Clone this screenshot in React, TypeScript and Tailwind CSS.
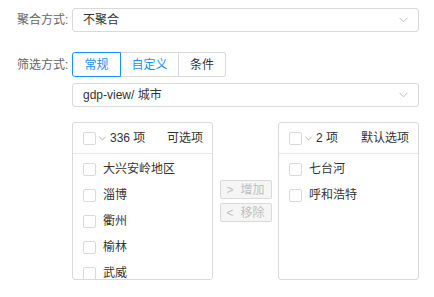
import React from "react";

const font = { fontFamily: '"Liberation Sans", "Noto Sans CJK SC", sans-serif' };

function Chevron({ className = "" }: { className?: string }) {
  return (
    <svg width="9" height="6" viewBox="0 0 9 6" className={className}>
      <path d="M0.5 0.8 L4.5 4.8 L8.5 0.8" fill="none" stroke="currentColor" strokeWidth="1" />
    </svg>
  );
}

function Box() {
  return <span className="inline-block w-[13px] h-[13px] border border-[#d9d9d9] rounded-[2px] bg-white shrink-0" />;
}

function Panel({ count, title, items }: { count: string; title: string; items: string[] }) {
  return (
    <div className="w-[141px] h-[158px] border border-[#d9d9d9] rounded-[3px] overflow-hidden flex flex-col">
      <div className="h-[31px] border-b border-[#e8e8e8] flex items-center pl-[10px] pr-[9px] shrink-0">
        <Box />
        <Chevron className="ml-[3px] text-[#999] w-[7px] h-[5px]" />
        <span className="ml-[4px] text-[12px] text-[#333]">{count}</span>
        <span className="ml-auto text-[12px] text-[#333]">{title}</span>
      </div>
      <div className="pt-[2px]">
        {items.map((t) => (
          <div key={t} className="h-[26px] flex items-center pl-[10px]">
            <Box />
            <span className="ml-[7px] text-[12px] text-[#333]">{t}</span>
          </div>
        ))}
      </div>
    </div>
  );
}

function Select({ value }: { value: string }) {
  return (
    <div className="w-[347px] h-[24px] border border-[#d9d9d9] rounded-[3px] flex items-center pl-[10px] pr-[9px]">
      <span className="text-[12px] text-[#333]">{value}</span>
      <Chevron className="ml-auto mr-[1px] text-[#bfbfbf]" />
    </div>
  );
}

export default function App() {
  return (
    <div className="w-[434px] h-[297px] bg-white relative" style={font}>
      <div className="pt-[8px] flex flex-col">
        <div className="flex items-center">
          <div className="w-[72px] pl-[17px] text-[12px] text-[#666]">聚合方式:</div>
          <Select value="不聚合" />
        </div>
        <div className="flex items-center mt-[20px]">
          <div className="w-[72px] pl-[17px] text-[12px] text-[#666]">筛选方式:</div>
          <div className="flex h-[25px]">
            <div className="w-[49px] border border-[#1890ff] text-[#1890ff] rounded-l-[3px] flex items-center justify-center text-[12px] relative z-10">常规</div>
            <div className="w-[58px] border-y border-r border-[#d9d9d9] text-[#1890ff] flex items-center justify-center text-[12px]">自定义</div>
            <div className="w-[47px] border-y border-r border-[#d9d9d9] text-[#333] rounded-r-[3px] flex items-center justify-center text-[12px]">条件</div>
          </div>
        </div>
        <div className="flex mt-[6px] pl-[72px]">
          <Select value="gdp-view/ 城市" />
        </div>
        <div className="flex items-center mt-[15px] pl-[72px]">
          <Panel count="336 项" title="可选项" items={["大兴安岭地区", "淄博", "衢州", "榆林", "武威"]} />
          <div className="w-[65px] flex flex-col items-center gap-[4px]">
            <div className="w-[52px] h-[19px] border border-[#d9d9d9] bg-[#f5f5f5] rounded-[2px] flex items-center justify-center text-[12px] text-[#bfbfbf]">
              <span className="mr-[7px]">&gt;</span>增加
            </div>
            <div className="w-[52px] h-[19px] border border-[#d9d9d9] bg-[#f5f5f5] rounded-[2px] flex items-center justify-center text-[12px] text-[#bfbfbf]">
              <span className="mr-[7px]">&lt;</span>移除
            </div>
          </div>
          <Panel count="2 项" title="默认选项" items={["七台河", "呼和浩特"]} />
        </div>
      </div>
    </div>
  );
}
